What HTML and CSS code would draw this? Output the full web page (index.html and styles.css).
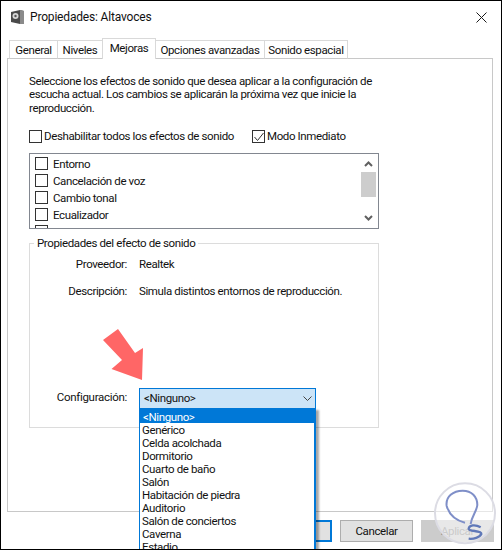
FILE: index.html
```html
<!DOCTYPE html>
<html lang="es">
<head>
    <meta charset="UTF-8">
    <title>Propiedades: Altavoces</title>
    <link rel="stylesheet" href="styles.css">
</head>
<body>
    <div class="window">
        <div class="titlebar">
            <svg class="app-icon" width="13" height="14" viewBox="0 0 13 14">
                <path d="M0 2 9 0 13 1V14L9 14 0 12Z" fill="#4a4a4a"/>
                <path d="M9 0 13 1V14H9Z" fill="#8a8a8a"/>
                <circle cx="4.5" cy="6" r="3" fill="#d8d8d8"/>
                <circle cx="4.5" cy="6" r="1.2" fill="#555"/>
            </svg>
            <span class="title">Propiedades: Altavoces</span>
            <svg class="close" width="11" height="11" viewBox="0 0 11 11">
                <path d="M.5.5 10.5 10.5M10.5.5.5 10.5" stroke="#1a1a1a" fill="none"/>
            </svg>
        </div>

        <div class="tabs">
            <div class="tab tab-general">General</div>
            <div class="tab tab-niveles">Niveles</div>
            <div class="tab tab-mejoras active">Mejoras</div>
            <div class="tab tab-opciones">Opciones avanzadas</div>
            <div class="tab tab-sonido">Sonido espacial</div>
        </div>

        <div class="panel">
            <p class="intro">Seleccione los efectos de sonido que desea aplicar a la configuración de<br>escucha actual. Los cambios se aplicarán la próxima vez que inicie la<br>reproducción.</p>

            <div class="options">
                <label class="check check-disable"><span class="box"></span><span class="option-text">Deshabilitar todos los efectos de sonido</span></label>
                <label class="check"><span class="box">
                    <svg width="10" height="10" viewBox="0 0 10 10"><path d="M.5 5 3.5 8.5 9.5 1" stroke="#333" fill="none"/></svg>
                </span><span class="option-text">Modo Inmediato</span></label>
            </div>

            <div class="listbox">
                <div class="items">
                    <label class="check item"><span class="box"></span><span class="item-text">Entorno</span></label>
                    <label class="check item"><span class="box"></span><span class="item-text">Cancelación de voz</span></label>
                    <label class="check item"><span class="box"></span><span class="item-text">Cambio tonal</span></label>
                    <label class="check item"><span class="box"></span><span class="item-text">Ecualizador</span></label>
                    <label class="check item"><span class="box"></span></label>
                </div>
                <div class="scrollbar">
                    <svg width="9" height="6" viewBox="0 0 9 6"><path d="M1 5 4.5 1.5 8 5" stroke="#606060" stroke-width="2" fill="none"/></svg>
                    <div class="thumb"></div>
                    <svg width="9" height="6" viewBox="0 0 9 6"><path d="M1 1 4.5 4.5 8 1" stroke="#606060" stroke-width="2" fill="none"/></svg>
                </div>
            </div>

            <fieldset class="group">
                <legend>Propiedades del efecto de sonido</legend>
                <div class="row row-prov"><span class="key">Proveedor:</span><span>Realtek</span></div>
                <div class="row row-desc"><span class="key">Descripción:</span><span>Simula distintos entornos de reproducción.</span></div>
                <div class="row row-config">
                    <span class="key">Configuración:</span>
                    <div class="combo">
                        <span class="combo-text">&lt;Ninguno&gt;</span>
                        <svg width="9" height="5" viewBox="0 0 9 5"><path d="M.5.5 4.5 4.5 8.5.5" stroke="#444" fill="none"/></svg>
                        <ul class="dropdown">
                            <li class="selected">&lt;Ninguno&gt;</li>
                            <li>Genérico</li>
                            <li>Celda acolchada</li>
                            <li>Dormitorio</li>
                            <li>Cuarto de baño</li>
                            <li>Salón</li>
                            <li>Habitación de piedra</li>
                            <li>Auditorio</li>
                            <li>Salón de conciertos</li>
                            <li>Caverna</li>
                            <li>Estadio</li>
                        </ul>
                    </div>
                </div>
            </fieldset>
        </div>

        <div class="footer">
            <button class="btn default"></button>
            <button class="btn">Cancelar</button>
            <button class="btn disabled">Aplicar</button>
        </div>

        <!-- flecha roja sobre el dialogo -->
        <svg class="arrow" width="41" height="53" viewBox="0 0 41 53">
            <path d="M15 1 0 12 19 32 8.5 41 39 52 40 20 32 25Z" fill="#ff6666"/>
        </svg>

        <!-- marca de agua -->
        <svg class="watermark" width="82" height="70" viewBox="0 0 246 210">
            <circle cx="135" cy="100" r="90" fill="#fff" fill-opacity=".55" stroke="#dcdce4" stroke-width="6"/>
            <path d="M135 128C110 122 88 105 80 78 76 50 100 32 128 32 155 32 172 50 172 75 170 95 155 108 152 132" fill="none" stroke="#7f8fc8" stroke-width="6"/>
            <path d="M182 142C165 132 148 135 146 146 146 156 185 150 184 162 180 172 160 178 146 176" fill="none" stroke="#5f78b8" stroke-width="7"/>
        </svg>
    </div>
</body>
</html>
```

FILE: styles.css
```css
* {
    box-sizing: border-box;
}
html, body {
    margin: 0;
    padding: 0;
}
body {
    width: 502px;
    height: 550px;
    overflow: hidden;
    font-family: Roboto, Arial, sans-serif;
    font-size: 11.5px;
    letter-spacing: -.38px;
    color: #111;
    background: #fff;
    white-space: nowrap;
}
.window {
    position: relative;
    width: 502px;
    height: 550px;
    border: 1px solid #000;
    overflow: hidden;
    background: #fff;
}

/* barra de titulo */
.titlebar {
    display: flex;
    align-items: center;
    height: 37px;
    padding: 0 0 5px 10px;
}
.title {
    margin-left: 6px;
    font-size: 12px;
    letter-spacing: -.18px;
}
.close {
    margin-left: auto;
    margin-right: 14px;
}

/* pestañas */
.tabs {
    display: flex;
    align-items: flex-end;
    height: 20px;
    padding-left: 8px;
    position: relative;
    z-index: 1;
}
.tab {
    display: flex;
    align-items: center;
    justify-content: center;
    height: 19px;
    margin-bottom: -1px;
    margin-left: -1px;
    border: 1px solid #d9d9d9;
    border-bottom-color: #c8c8c8;
    background: #fff;
}
.tab:first-child {
    margin-left: 0;
}
.tab-general { width: 49px; }
.tab-niveles { width: 46px; }
.tab-mejoras { width: 54px; }
.tab-opciones { width: 110px; }
.tab-sonido { width: 84px; }
.tab.active {
    height: 21px;
    padding-bottom: 2px;
    border-bottom: 0;
    position: relative;
    z-index: 1;
}

/* panel principal */
.panel {
    width: 486px;
    height: 454px;
    margin-left: 6px;
    padding: 16px 21px 0;
    border: 1px solid #c8c8c8;
    background: #fff;
}
.intro {
    margin: 0;
    line-height: 13.4px;
}
.options {
    display: flex;
    margin-top: 15px;
}
.check {
    display: flex;
    align-items: center;
    height: 13px;
}
.check-disable {
    width: 223px;
}
.option-text {
    padding-bottom: 2px;
}
.box {
    display: flex;
    align-items: center;
    justify-content: center;
    flex: none;
    width: 13px;
    height: 13px;
    margin-right: 2px;
    border: 1px solid #333;
    background: #fff;
}

/* lista de efectos */
.listbox {
    display: flex;
    width: 350px;
    height: 76px;
    margin-top: 10px;
    border: 1px solid #828790;
    overflow: hidden;
}
.items {
    flex: 1;
    padding: 1px 0 0 5px;
}
.item {
    height: 17px;
}
.item .box {
    margin-right: 5px;
}
.item-text {
    padding-top: 1px;
}
.scrollbar {
    display: flex;
    flex-direction: column;
    align-items: center;
    width: 17px;
    margin-right: 1px;
    padding-top: 7px;
}
.thumb {
    flex: none;
    width: 15px;
    height: 25px;
    margin-top: 5px;
    margin-bottom: 18px;
    background: #cdcdcd;
}

/* grupo de propiedades */
.group {
    position: relative;
    width: 350px;
    height: 192px;
    margin: 7px 0 0;
    padding: 0;
    border: 1px solid #dcdcdc;
    min-width: 0;
}
.group legend {
    margin-left: 4px;
    padding: 0 3px;
    line-height: 14px;
}
.row {
    display: flex;
    align-items: center;
    height: 14px;
}
.key {
    flex: none;
    width: 97px;
    margin-right: 12px;
    text-align: right;
}
.row-prov {
    margin-top: 7px;
}
.row-desc {
    margin-top: 13px;
}
.row-config {
    height: 21px;
    margin-top: 90px;
}
.row-config .key {
    padding-bottom: 3px;
    letter-spacing: -.3px;
}
.combo {
    position: relative;
    display: flex;
    align-items: center;
    justify-content: space-between;
    flex: none;
    width: 177px;
    height: 21px;
    padding: 0 3px 0 4px;
    border: 1px solid #0078d7;
    background: #cce4f7;
}
.combo-text {
    padding-bottom: 1px;
}
.dropdown {
    position: absolute;
    top: 19px;
    left: -1px;
    width: 177px;
    height: 160px;
    margin: 0;
    padding: 0;
    list-style: none;
    border-left: 1px solid #0078d7;
    border-right: 2px solid #0078d7;
    background: #fff;
    box-shadow: 3px 2px 2px rgba(0, 0, 0, .35);
    z-index: 2;
}
.dropdown li {
    height: 13px;
    padding-left: 2px;
    line-height: 15px;
}
.dropdown .selected {
    height: 15px;
    padding: 3px 0 0 3px;
    line-height: 13px;
    color: #fff;
    background: #0078d7;
}

/* botones */
.footer {
    display: flex;
    justify-content: flex-end;
    gap: 8px;
    margin-top: 8px;
    padding-right: 7px;
}
.btn {
    width: 73px;
    height: 22px;
    padding: 0;
    font: inherit;
    letter-spacing: inherit;
    color: #111;
    border: 1px solid #adadad;
    background: #e1e1e1;
}
.btn.default {
    border: 2px solid #0078d7;
}
.btn.disabled {
    color: #8a8a8a;
    border-color: #cccccc;
    background: #cccccc;
}

/* elementos superpuestos */
.arrow {
    position: absolute;
    left: 102px;
    top: 327px;
    z-index: 3;
}
.watermark {
    position: absolute;
    left: 419px;
    top: 479px;
    z-index: 3;
}
```
